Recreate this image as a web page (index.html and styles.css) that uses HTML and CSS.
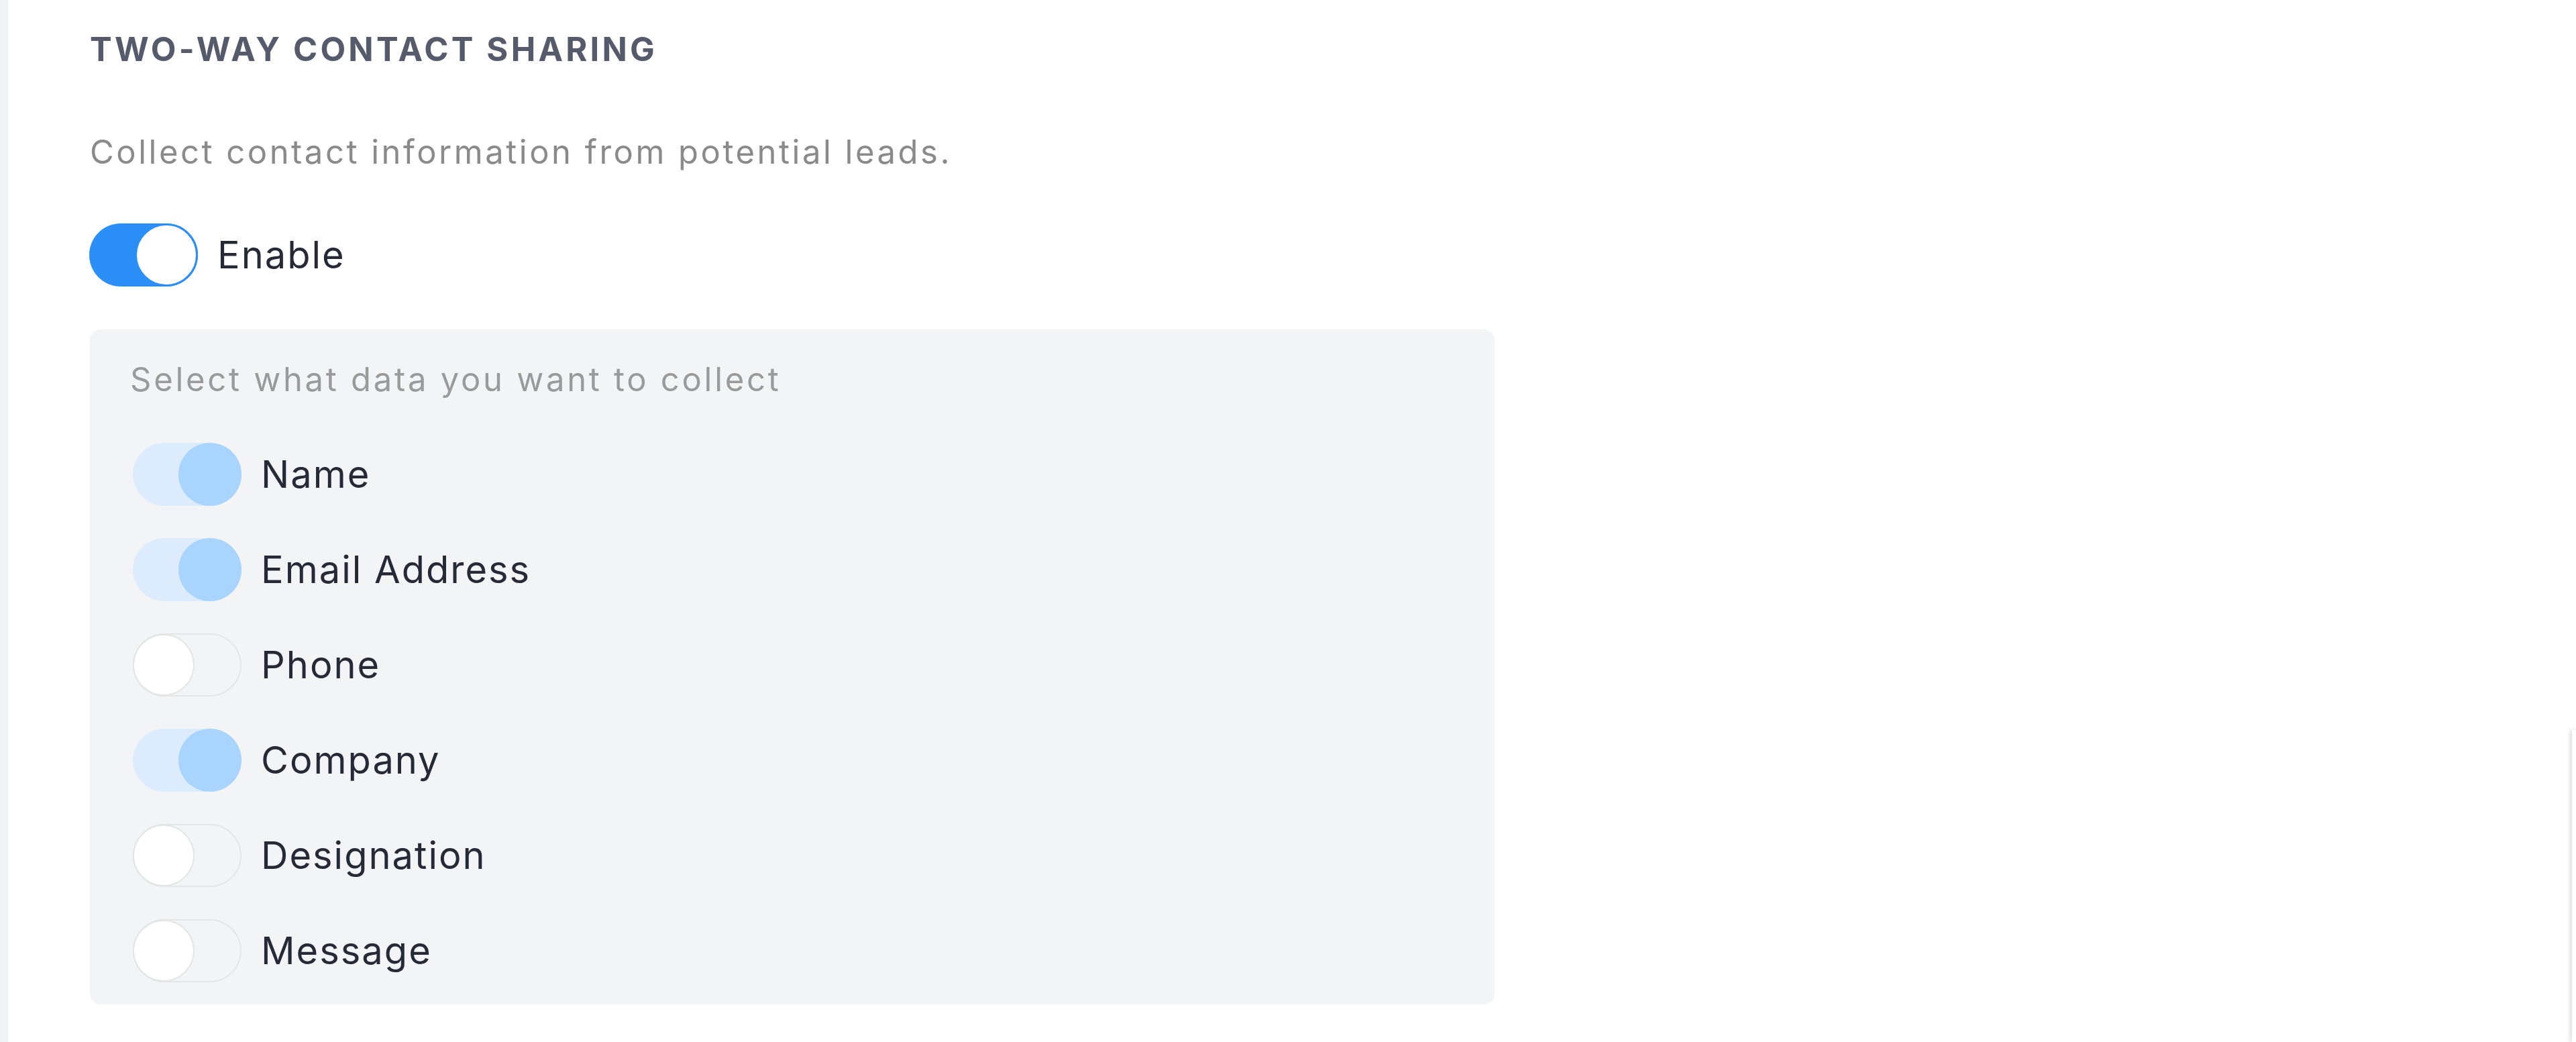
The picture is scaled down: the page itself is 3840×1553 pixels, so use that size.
FILE: index.html
```html
<!DOCTYPE html>
<html lang="en">
<head>
<meta charset="utf-8">
<title>Two-way contact sharing</title>
<link rel="stylesheet" href="styles.css">
</head>
<body>
<div class="page">
  <aside class="rail"></aside>
  <main class="content">
    <h2 class="title">TWO-WAY CONTACT SHARING</h2>
    <p class="desc">Collect contact information from potential leads.</p>
    <label class="row row-main">
      <span class="switch switch-on"><span class="knob"></span></span>
      <span class="label">Enable</span>
    </label>
    <section class="panel">
      <p class="panel-title">Select what data you want to collect</p>
      <div class="fields">
        <div class="row"><span class="switch switch-soft"><span class="knob"></span></span><span class="label">Name</span></div>
        <div class="row"><span class="switch switch-soft"><span class="knob"></span></span><span class="label">Email Address</span></div>
        <div class="row"><span class="switch switch-off"><span class="knob"></span></span><span class="label">Phone</span></div>
        <div class="row"><span class="switch switch-soft"><span class="knob"></span></span><span class="label">Company</span></div>
        <div class="row"><span class="switch switch-off"><span class="knob"></span></span><span class="label">Designation</span></div>
        <div class="row"><span class="switch switch-off"><span class="knob"></span></span><span class="label">Message</span></div>
      </div>
    </section>
  </main>
  <div class="edge"></div>
</div>
</body>
</html>
```
FILE: styles.css
```css
* { box-sizing: border-box; }

html, body {
  margin: 0;
  padding: 0;
  background: #ffffff;
}

body {
  font-family: "Inter", "Roboto", "Noto Sans", sans-serif;
  color: #262a36;
  width: 3840px;
  height: 1553px;
  overflow: hidden;
}

.page {
  position: relative;
  display: flex;
  height: 1553px;
}

.rail {
  width: 12px;
  flex: none;
  background: #f2f3f5;
}

.content {
  flex: 1;
  padding: 44px 0 0 122px;
}

.title {
  margin: 0;
  font-size: 49px;
  line-height: 60px;
  font-weight: 700;
  letter-spacing: 4.2px;
  color: #555b6b;
}

.desc {
  margin: 93px 0 0;
  font-size: 49px;
  line-height: 60px;
  font-weight: 400;
  letter-spacing: 3.5px;
  color: #8a8a8a;
}

.row {
  display: flex;
  align-items: center;
  gap: 29px;
}

.row-main {
  margin-top: 76px;
  margin-left: -1px;
}

.label {
  font-size: 56px;
  line-height: 60px;
  letter-spacing: 2px;
  color: #262a36;
}

.switch {
  position: relative;
  display: flex;
  align-items: center;
  width: 162px;
  height: 94px;
  border-radius: 47px;
  flex: none;
}

.knob {
  width: 94px;
  height: 94px;
  border-radius: 50%;
}

.switch-on {
  background: #2b8ff7;
  justify-content: flex-end;
}

.switch-on .knob {
  background: #ffffff;
  border: 3px solid #2b8ff7;
}

.switch-soft {
  background: #dcecfd;
  justify-content: flex-end;
}

.switch-soft .knob {
  background: #a9d4fd;
}

.switch-off {
  border: 2px solid #e4e5e7;
  justify-content: flex-start;
}

.switch-off .knob {
  width: 92px;
  height: 92px;
  margin-left: -2px;
  background: #ffffff;
  border: 2px solid #e4e5e7;
}

.panel {
  margin-top: 64px;
  width: 2094px;
  background: #f3f4f6;
  border-radius: 16px;
  padding: 45px 60px 33px 64px;
}

.panel-title {
  margin: 0 0 0 -4px;
  font-size: 49px;
  line-height: 60px;
  letter-spacing: 3.7px;
  color: #9a9a9a;
}

.fields {
  margin-top: 64px;
  display: flex;
  flex-direction: column;
  gap: 48px;
}

.edge {
  position: absolute;
  right: 0;
  top: 1088px;
  bottom: 0;
  width: 6px;
  background: #ffffff;
  box-shadow: -2px 0 6px rgba(0, 0, 0, 0.18);
}
```
